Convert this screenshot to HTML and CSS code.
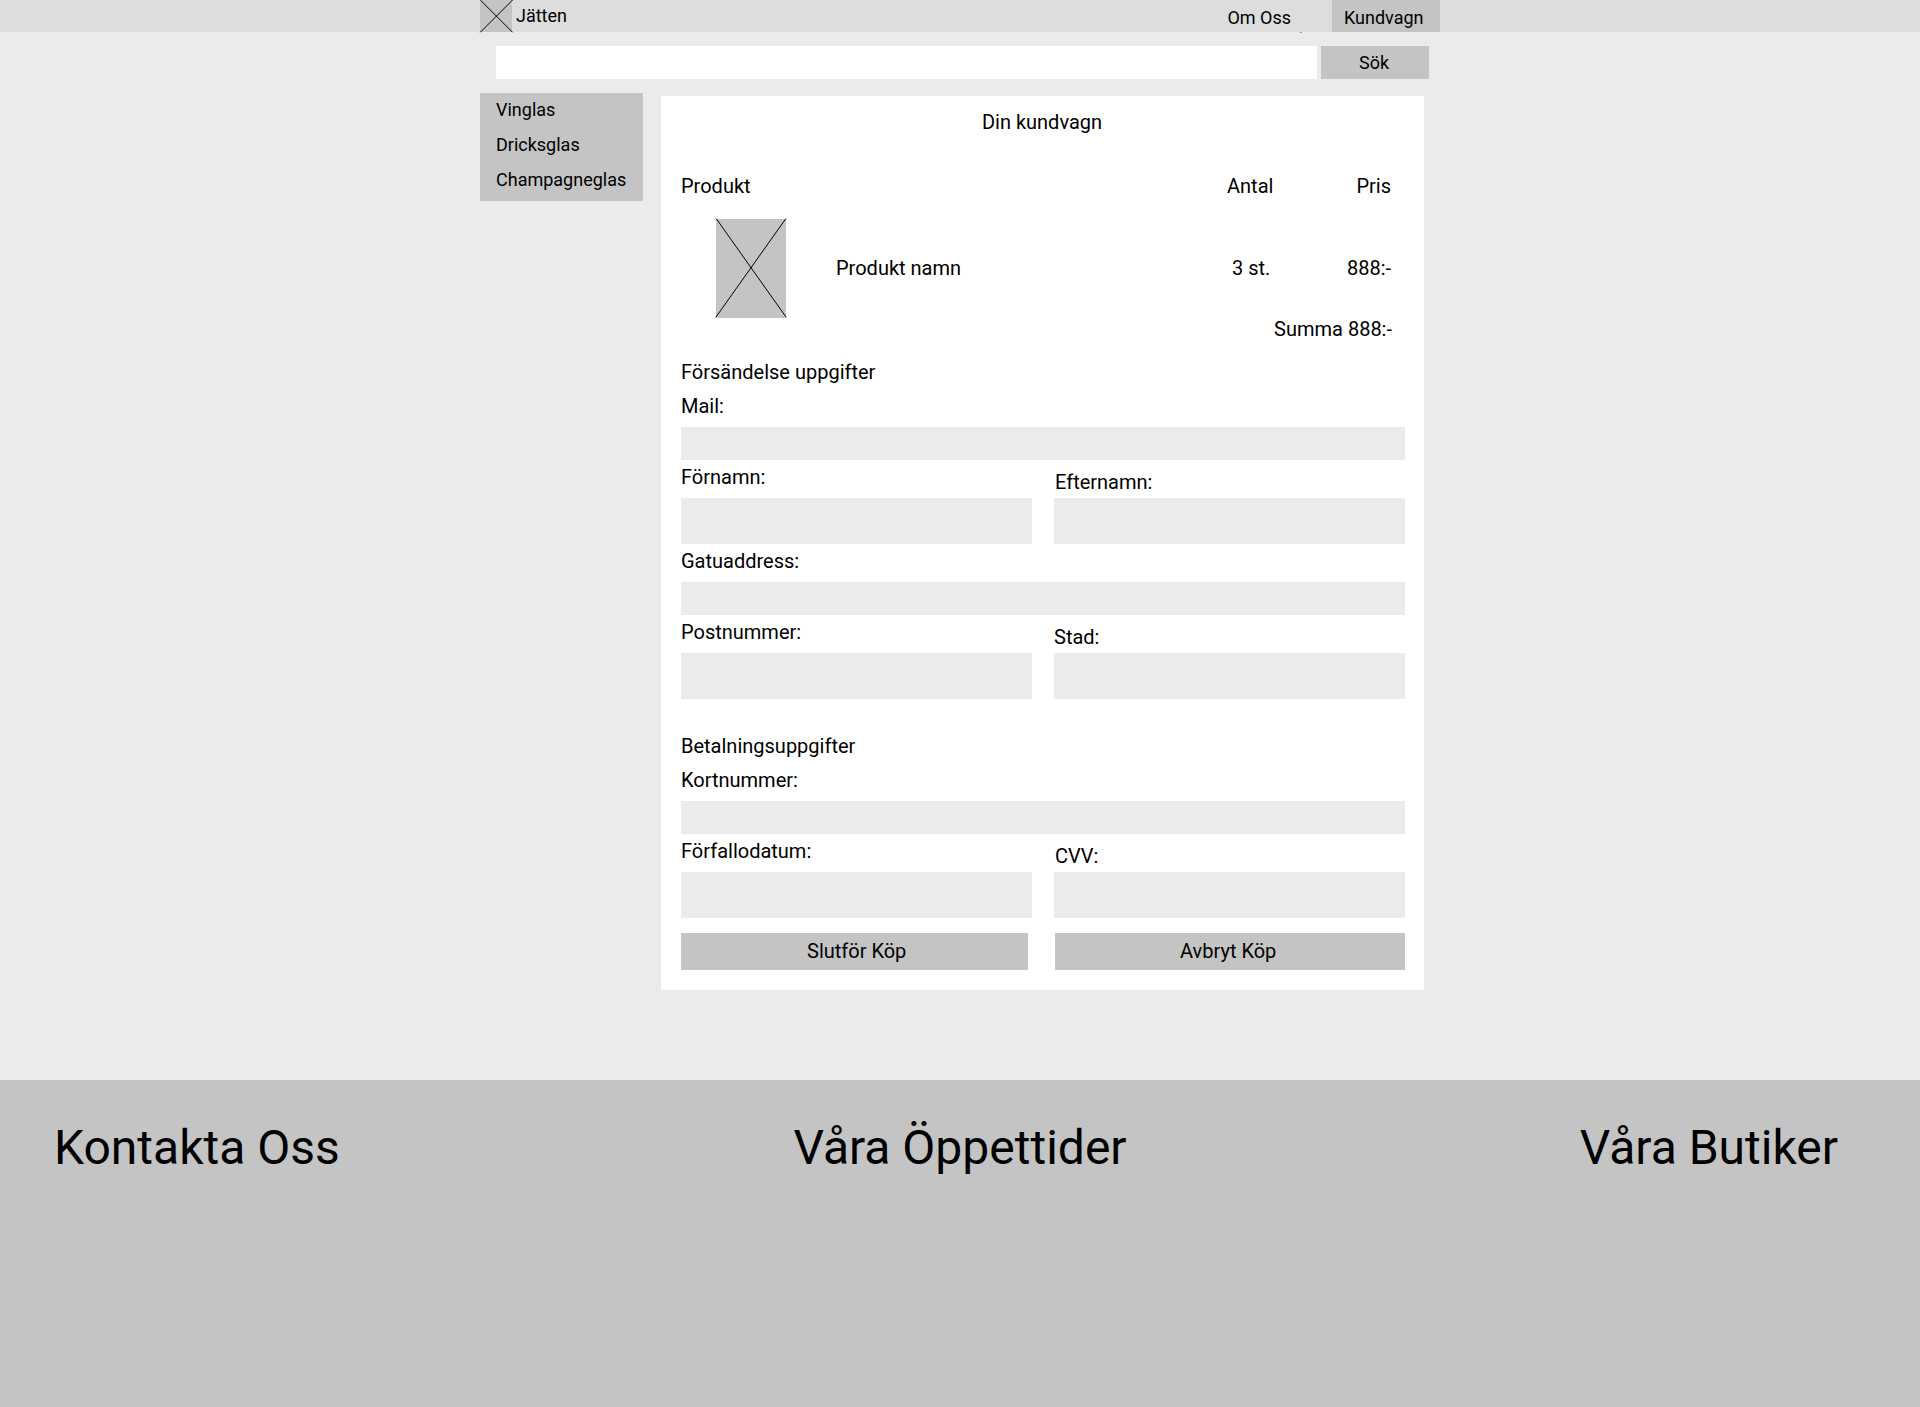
FILE: index.html
```html
<!DOCTYPE html>
<html lang="sv">
<head>
<meta charset="utf-8">
<title>Jätten – Kundvagn</title>
<link rel="stylesheet" href="styles.css">
</head>
<body>
<header class="topbar">
  <div class="container topbar-inner">
    <a class="brand">
      <svg class="logo" width="32" height="32" viewBox="0 0 32 32"><rect width="32" height="32" fill="#c4c4c4"/><path d="M.3 0 32.6 32.3M32.6 0 .3 32.3" stroke="#000"/></svg>
      <span class="brand-name">Jätten</span>
    </a>
    <nav class="nav">
      <a class="nav-link">Om Oss</a>
      <a class="nav-cart">Kundvagn</a>
    </nav>
    <span class="speck"></span>
  </div>
</header>
<form class="container search">
  <input class="search-input" type="text" aria-label="Sök">
  <button class="search-button" type="button">Sök</button>
</form>
<div class="container columns">
  <aside class="sidebar">
    <a>Vinglas</a>
    <a>Dricksglas</a>
    <a>Champagneglas</a>
  </aside>
  <main class="card">
    <h1 class="title">Din kundvagn</h1>
    <div class="row head">
      <span>Produkt</span><span class="qty">Antal</span><span class="price">Pris</span>
    </div>
    <div class="row item">
      <svg class="thumb" width="70" height="99" viewBox="0 0 70 99"><rect width="70" height="99" fill="#c4c4c4"/><path d="M.3-.3 70.2 98.3M69.8-.3-.2 98.3" stroke="#000"/></svg>
      <span class="name">Produkt namn</span><span class="qty">3 st.</span><span class="price">888:-</span>
    </div>
    <p class="total">Summa 888:-</p>
    <form class="form">
      <h2>Försändelse uppgifter</h2>
      <label class="field first"><span>Mail:</span><input type="text"></label>
      <div class="pair">
        <label class="field"><span>Förnamn:</span><input type="text"></label>
        <label class="field"><span class="inset">Efternamn:</span><input type="text"></label>
      </div>
      <label class="field"><span>Gatuaddress:</span><input type="text"></label>
      <div class="pair">
        <label class="field"><span>Postnummer:</span><input type="text"></label>
        <label class="field"><span>Stad:</span><input type="text"></label>
      </div>
      <h2 class="payment">Betalningsuppgifter</h2>
      <label class="field first"><span>Kortnummer:</span><input type="text"></label>
      <div class="pair">
        <label class="field"><span>Förfallodatum:</span><input type="text"></label>
        <label class="field"><span class="inset">CVV:</span><input type="text"></label>
      </div>
      <div class="actions">
        <button class="submit" type="button">Slutför Köp</button>
        <button class="cancel" type="button">Avbryt Köp</button>
      </div>
    </form>
  </main>
</div>
<footer class="footer">
  <h2>Kontakta Oss</h2>
  <h2>Våra Öppettider</h2>
  <h2 class="stores">Våra Butiker</h2>
</footer>
</body>
</html>
```
FILE: styles.css
```css
* { box-sizing: border-box; }

body {
  margin: 0;
  min-height: 1407px;
  display: flex;
  flex-direction: column;
  background: #ebebeb;
  color: #000;
  font: 18px/21px Roboto, sans-serif;
}

h1, h2, p { margin: 0; font-size: inherit; font-weight: 400; }

input, button {
  display: block;
  margin: 0;
  padding: 0;
  border: 0;
  border-radius: 0;
  font: inherit;
  color: inherit;
}

button { background: #c4c4c4; }

.container { width: 960px; margin: 0 auto; }

.topbar { height: 32px; background: #ddd; }
.topbar-inner { position: relative; display: flex; justify-content: space-between; }
.brand { display: flex; gap: 4px; }
.logo, .thumb { display: block; overflow: visible; }
.brand-name { padding-top: 5px; }
.nav { display: flex; gap: 41px; }
.nav-link { padding-top: 7px; }
.nav-cart { width: 108px; height: 32px; padding: 7px 0 0 12px; background: #c4c4c4; }
.speck { position: absolute; left: 820px; top: 32px; width: 2px; height: 1px; background: #999; }

.search { display: flex; gap: 4px; padding: 14px 11px 0 16px; }
.search-input { flex: 1; min-width: 0; height: 33px; background: #fff; }
.search-button { width: 108px; height: 33px; padding: 0 2px 1px 0; }

.columns { display: flex; align-items: flex-start; gap: 18px; padding-top: 14px; }
.sidebar {
  width: 163px;
  height: 108px;
  display: flex;
  flex-direction: column;
  gap: 14px;
  padding: 6px 0 0 16px;
  background: #c4c4c4;
}

.card {
  width: 763px;
  height: 894px;
  margin-top: 3px;
  padding: 14px 19px 0 20px;
  background: #fff;
  font-size: 20px;
  line-height: 24px;
}
.title { padding-right: 2px; text-align: center; }
.row { display: flex; align-items: center; padding-right: 14px; }
.qty { width: 128px; margin-left: auto; }
.price { display: flex; justify-content: flex-end; width: 36px; white-space: nowrap; }
.head { margin-top: 40px; }
.item { margin-top: 21px; padding-left: 35px; }
.item span { padding-bottom: 2px; }
.item .qty { width: 123px; }
.name { margin-left: 50px; }
.total { margin-top: -1px; padding-right: 13px; text-align: right; }

.form { margin-top: 19px; }
.field { display: block; padding-top: 5px; }
.field.first { padding-top: 10px; }
.field span { display: block; }
.field input { width: 724px; height: 33px; margin-top: 9px; background: #ebebeb; }
.pair { display: flex; gap: 22px; }
.pair .field { width: 351px; }
.pair .field:last-child { padding-top: 10px; }
.pair .field input { width: 351px; height: 46px; }
.pair .field:last-child input { margin-top: 4px; }
.inset { padding-left: 1px; }
.payment { padding-top: 35px; }

.actions { display: flex; gap: 27px; margin-top: 15px; }
.actions button { height: 37px; padding-bottom: 2px; text-align: left; }
.submit { width: 347px; padding-left: 126px; }
.cancel { width: 350px; padding-left: 125px; }

.footer {
  flex: 1;
  display: grid;
  grid-template-columns: 1fr auto 1fr;
  margin-top: 90px;
  padding: 39px 54px 0;
  background: #c4c4c4;
  font-size: 48px;
  line-height: 57px;
}
.stores { padding-right: 28px; text-align: right; }
```
